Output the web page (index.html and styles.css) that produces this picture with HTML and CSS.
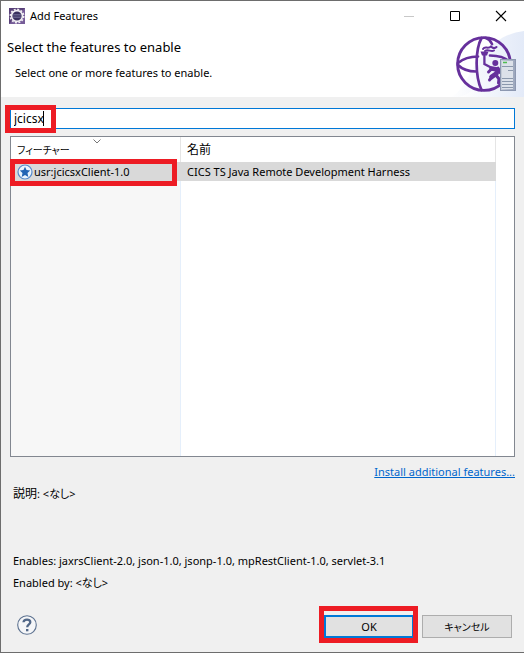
FILE: index.html
```html
<!DOCTYPE html>
<html lang="ja">
<head>
<meta charset="utf-8">
<title>Add Features</title>
<link rel="stylesheet" href="styles.css">
</head>
<body>
<main class="dialog">
  <header class="banner">
    <div class="titlebar">
      <svg class="app-icon" viewBox="0 0 16 16" aria-hidden="true">
        <rect width="16" height="16" fill="#584078"/>
        <path d="M0 16L16 0V16Z" fill="#765c98"/>
        <circle cx="8" cy="8" r="6.7" fill="none" stroke="#f1eef3" stroke-width="1.6" stroke-dasharray="2 1.508"/>
        <circle cx="8" cy="8" r="5.4" fill="#39305e" stroke="#f1eef3" stroke-width="1.6"/>
        <path d="M4.2 6.5h7.6M3.8 8h8.4M4.2 9.5h7.6" stroke="#77749e" stroke-width=".7"/>
      </svg>
      <span class="title">Add Features</span>
      <div class="window-controls">
        <button type="button" class="window-button" aria-label="Minimize" disabled><svg viewBox="0 0 12 12"><path d="M1 6.5h10" stroke="#c8c8c8"/></svg></button>
        <button type="button" class="window-button" aria-label="Maximize"><svg viewBox="0 0 12 12"><path d="M1.500 1.500h9v9h-9z" fill="none" stroke="#000"/></svg></button>
        <button type="button" class="window-button" aria-label="Close"><svg viewBox="0 0 12 12"><path d="M1 1l10 10M11 1L1 11" stroke="#000" stroke-width="1.1"/></svg></button>
      </div>
    </div>
    <h1 class="heading">Select the features to enable</h1>
    <p class="lead">Select one or more features to enable.</p>
    <svg class="emblem" viewBox="0 0 74 67" aria-hidden="true">
      <defs>
        <linearGradient id="haze" x1="0" y1="0" x2="1" y2="0"><stop offset="0" stop-color="#fff"/><stop offset="1" stop-color="#e3eaf8"/></linearGradient>
        <linearGradient id="case"><stop offset="0" stop-color="#c9cfdb"/><stop offset="1" stop-color="#9aa5bb"/></linearGradient>
      </defs>
      <path d="M0 67C14 62 18 42 33 25C45 10 58 3 74 1V67Z" fill="url(#haze)"/>
      <path d="M10 67C30 60 36 42 48 32C58 24 66 22 74 22V67Z" fill="url(#haze)"/>
      <g fill="none" stroke="#66309c" stroke-linecap="round">
        <circle cx="34" cy="34" r="26.400" stroke-width="2.900"/>
        <path stroke-width="2.700" d="M31.500 8C25 20 25 46 31.500 60M36 8C39 9 41 12 42 14M8 33C14 28 22 26.500 28 26.500M40 25.500C48 25.500 56 28 60 32M8 35C13 40 19 41.500 26 41.500"/>
        <path stroke-width="2" d="M33 19C35 15.500 38 19.500 41 16.500C43 18.500 45 18.500 46.500 17M35 21C38 18.500 41 22.500 44 20.500"/>
        <path stroke-width="2.300" d="M34.400 25V34L41 37.500"/>
        <path stroke-width="4.600" stroke-linejoin="round" d="M41.500 38.500L47.500 39.500L46.500 43.500L41.500 47"/>
        <path stroke-width="3" stroke-linejoin="round" d="M48 38L50 42.500M41.500 39L38.500 42M42 47L39.500 50M46 45L49 49L48.500 53"/>
      </g>
      <path d="M30.500 21.500h8l-1.500 4h-5z" fill="#66309c"/>
      <circle cx="45.300" cy="33" r="3" fill="#66309c"/>
      <rect x="50.500" y="29.500" width="15" height="31" fill="url(#case)" stroke="#8d98b1"/>
      <path d="M52 31h11v28H52z" fill="#dce1e9"/>
      <path d="M53 32.500h4" stroke="#50bd50" stroke-width="1.500"/>
      <path d="M52 36.500h11M58 40.500h5M52 48.500h11M52 51.500h11M52 54.500h11M52 57.500h11" stroke="#8b98ac"/>
    </svg>
  </header>
  <section class="content">
    <div class="filter">
      <input class="filter-input" type="text" value="jcicsx" aria-label="Filter features">
      <span class="caret"></span>
      <span class="mark mark-filter"></span>
    </div>
    <div class="list">
      <table class="features">
        <colgroup><col class="col-feature"><col class="col-name"><col></colgroup>
        <thead><tr><th><span class="kana">フィーチャー</span><svg class="sort" viewBox="0 0 8 5" aria-hidden="true"><path d="M.5.5L4 4L7.500.5" fill="none" stroke="#777"/></svg></th><th>名前</th><th></th></tr></thead>
        <tbody>
          <tr class="selected">
            <td><div class="feature"><svg class="star" viewBox="0 0 16 16" aria-hidden="true"><circle cx="8" cy="8" r="7" fill="#eaf3fc" stroke="#5489cc" stroke-width="1.2"/><path d="M8 2.800l1.500 3.300 3.700.4-2.700 2.600.8 3.800L8 11.100l-3.300 1.800.8-3.800L2.800 6.500l3.700-.4z" fill="#2264b4"/></svg>usr:jcicsxClient-1.0</div><span class="mark mark-row"></span></td>
            <td>CICS TS Java Remote Development Harness</td><td></td>
          </tr>
          <tr class="space"><td></td><td></td><td></td></tr>
        </tbody>
      </table>
    </div>
    <a class="install" href="#">Install additional features...</a>
    <p class="description"><span class="kanji">説明</span>: &lt;なし&gt;</p>
    <p class="detail">Enables: jaxrsClient-2.0, json-1.0, jsonp-1.0, mpRestClient-1.0, servlet-3.1</p>
    <p class="detail">Enabled by: &lt;なし&gt;</p>
  </section>
  <footer class="actions">
    <button type="button" class="help" aria-label="Help"><svg viewBox="0 0 20 20"><circle cx="10" cy="10" r="9.300" fill="#f5f6f8" stroke="#5d7290" stroke-width="1.100"/><path d="M6.500 7.300C6.700 3.600 13.500 3.700 13.300 7.300C13.200 9.500 10.300 9.300 10.200 12.300" fill="none" stroke="#526888" stroke-width="2.300"/><path d="M9 14h2.400v2.300H9z" fill="#526888"/></svg></button>
    <div class="ok-wrap"><button type="button" class="button ok">OK</button><span class="mark mark-ok"></span></div>
    <button type="button" class="button cancel"><span class="kana">キャンセル</span></button>
  </footer>
</main>
</body>
</html>
```
FILE: styles.css
```css
* { box-sizing: border-box; }
body {
  margin: 0;
  background: #f0f0f0;
  color: #000;
  font: 11px/18px "Noto Sans", "Noto Sans CJK JP", sans-serif;
  font-feature-settings: "palt";
}
h1, p { margin: 0; font-weight: 400; }
button, input { font: inherit; color: inherit; }
svg { display: block; }
.dialog {
  min-height: 100vh;
  display: flex;
  flex-direction: column;
  border: 1px solid #6d6d6d;
  border-right: 0;
}
.banner { position: relative; height: 96px; background: #fff; }
.titlebar { display: flex; align-items: center; height: 29px; padding-left: 8px; }
.app-icon { width: 16px; height: 16px; }
.title { margin-left: 5px; }
.window-controls { display: flex; margin-left: auto; }
.window-button {
  display: flex; align-items: center; justify-content: center;
  width: 46px; height: 29px; padding: 0; border: 0; background: none;
}
.window-button svg { width: 12px; height: 12px; }
.heading { padding: 7px 6px 0; font-size: 13px; line-height: 20px; }
.lead { padding: 7px 14px 0; }
.emblem { position: absolute; right: 0; bottom: 0; width: 74px; height: 67px; }
.content { flex: 1; display: flex; flex-direction: column; padding: 11px 9px 0; }
.filter { position: relative; }
.filter-input {
  display: block; width: 100%; height: 21px; padding: 0 3px;
  border: 1px solid #0078d7; border-radius: 0; background: #fff; outline: 0;
  font-size: 12px;
}
.caret { position: absolute; left: 33px; top: 3px; width: 1px; height: 15px; background: #000; }
.mark { position: absolute; z-index: 1; border: 5px solid #ed1c24; pointer-events: none; }
.mark-filter { left: -5px; top: -3px; width: 51px; height: 28px; }
.list { height: 321px; margin-top: 7px; border: 1px solid #828790; background: #fff; }
.features { width: 100%; height: 100%; border-spacing: 0; table-layout: fixed; }
.col-feature { width: 170px; }
.col-name { width: 315px; }
.features th { position: relative; height: 25px; padding: 0 6px; text-align: left; font-size: 12px; font-weight: 400; border-right: 1px solid #e5e5e5; }
.features td { height: 19px; padding: 0 6px; border-right: 1px solid #e5effb; }
.features th:last-child, .features td:last-child { border-right: 0; }
.features td:first-child { position: relative; background: #f7f7f7; }
.features .selected td { background: #d9d9d9; border-right-color: #d9d9d9; }
.features .selected td:last-child { background: #fff; }
.features .space td { height: auto; }
.feature { display: flex; align-items: center; gap: 1px; }
.star { width: 16px; height: 16px; }
.sort { position: absolute; left: 82px; top: 2px; width: 8px; height: 5px; }
.mark-row { left: -1px; top: -3px; width: 167px; height: 27px; }
.kana { font-size: 10px; }
.kanji { font-size: 12px; }
.install { align-self: flex-end; margin-top: 6px; color: #0066cc; }
.description { padding: 4px 3px 0; margin-bottom: 49px; }
.detail { padding: 0 3px; margin-bottom: 4px; }
.actions { display: flex; align-items: flex-start; gap: 8px; padding: 0 12px 14px 16px; }
.help { width: 20px; height: 20px; padding: 0; border: 0; background: none; margin-right: auto; }
.ok-wrap { position: relative; }
.button { display: block; width: 90px; height: 23px; padding: 0; border: 1px solid #adadad; background: #e1e1e1; line-height: 18px; }
.ok { border: 2px solid #0078d7; }
.mark-ok { left: -5px; top: -9px; width: 99px; height: 37px; }
```
